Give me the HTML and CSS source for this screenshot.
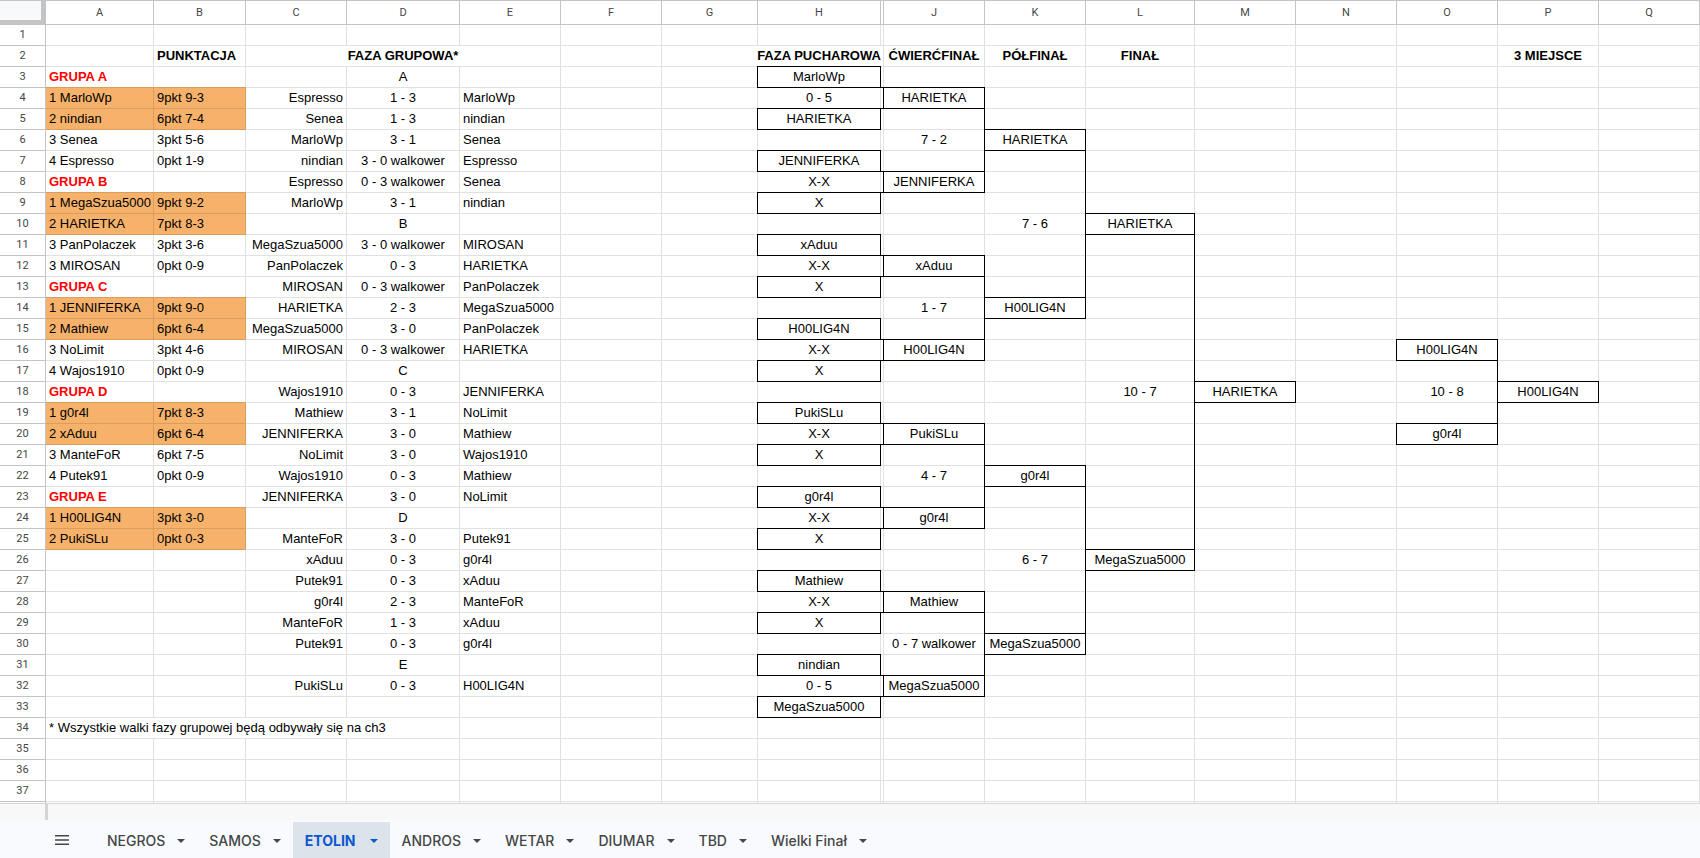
FILE: index.html
```html
<!DOCTYPE html>
<html lang="pl">
<head>
<meta charset="utf-8">
<title>ETOLIN</title>
<link rel="stylesheet" href="styles.css">
</head>
<body>
<main class="sheet">
<table class="grid">
<colgroup>
<col class="w-head"><col class="w-a"><col class="w-b"><col class="w-std"><col class="w-d"><col class="w-std"><col class="w-std"><col class="w-g"><col class="w-h"><col class="w-i"><col class="w-std"><col class="w-std"><col class="w-l"><col class="w-std"><col class="w-std"><col class="w-std"><col class="w-std"><col class="w-std">
</colgroup>
<thead>
<tr><th class="corner"></th><th scope="col">A</th><th scope="col">B</th><th scope="col">C</th><th scope="col">D</th><th scope="col">E</th><th scope="col">F</th><th scope="col">G</th><th scope="col">H</th><th></th><th scope="col">J</th><th scope="col">K</th><th scope="col">L</th><th scope="col">M</th><th scope="col">N</th><th scope="col">O</th><th scope="col">P</th><th scope="col">Q</th></tr>
</thead>
<tbody>
<tr><th scope="row">1</th><td></td><td></td><td></td><td></td><td></td><td></td><td></td><td></td><td></td><td></td><td></td><td></td><td></td><td></td><td></td><td></td><td></td></tr>
<tr class="titles"><th scope="row">2</th><td></td><td>PUNKTACJA</td><td class="open"></td><td class="open"><span class="spill">FAZA GRUPOWA*</span></td><td></td><td></td><td class="open"></td><td class="open"><span class="spill">FAZA PUCHAROWA</span></td><td></td><td><span class="spill">ĆWIERĆFINAŁ</span></td><td>PÓŁFINAŁ</td><td>FINAŁ</td><td></td><td></td><td></td><td>3 MIEJSCE</td><td></td></tr>
<tr><th scope="row">3</th><td class="group">GRUPA A</td><td></td><td></td><td>A</td><td></td><td></td><td></td><td class="box">MarloWp</td><td class="under"></td><td></td><td></td><td></td><td></td><td></td><td></td><td></td><td></td></tr>
<tr><th scope="row">4</th><td class="top">1 MarloWp</td><td class="top">9pkt 9-3</td><td>Espresso</td><td>1 - 3</td><td>MarloWp</td><td></td><td></td><td>0 - 5</td><td class="under"></td><td class="box">HARIETKA</td><td></td><td></td><td></td><td></td><td></td><td></td><td></td></tr>
<tr><th scope="row">5</th><td class="top">2 nindian</td><td class="top">6pkt 7-4</td><td>Senea</td><td>1 - 3</td><td>nindian</td><td></td><td></td><td class="box">HARIETKA</td><td></td><td class="link"></td><td></td><td></td><td></td><td></td><td></td><td></td><td></td></tr>
<tr><th scope="row">6</th><td>3 Senea</td><td>3pkt 5-6</td><td>MarloWp</td><td>3 - 1</td><td>Senea</td><td></td><td></td><td></td><td></td><td class="link">7 - 2</td><td class="box">HARIETKA</td><td></td><td></td><td></td><td></td><td></td><td></td></tr>
<tr><th scope="row">7</th><td>4 Espresso</td><td>0pkt 1-9</td><td>nindian</td><td>3 - 0 walkower</td><td>Espresso</td><td></td><td></td><td class="box">JENNIFERKA</td><td class="under"></td><td class="link"></td><td class="link"></td><td></td><td></td><td></td><td></td><td></td><td></td></tr>
<tr><th scope="row">8</th><td class="group">GRUPA B</td><td></td><td>Espresso</td><td>0 - 3 walkower</td><td>Senea</td><td></td><td></td><td>X-X</td><td class="under"></td><td class="box">JENNIFERKA</td><td class="link"></td><td></td><td></td><td></td><td></td><td></td><td></td></tr>
<tr><th scope="row">9</th><td class="top">1 MegaSzua5000</td><td class="top">9pkt 9-2</td><td>MarloWp</td><td>3 - 1</td><td>nindian</td><td></td><td></td><td class="box">X</td><td></td><td></td><td class="link"></td><td></td><td></td><td></td><td></td><td></td><td></td></tr>
<tr><th scope="row">10</th><td class="top">2 HARIETKA</td><td class="top">7pkt 8-3</td><td></td><td>B</td><td></td><td></td><td></td><td></td><td></td><td></td><td class="link">7 - 6</td><td class="box">HARIETKA</td><td></td><td></td><td></td><td></td><td></td></tr>
<tr><th scope="row">11</th><td>3 PanPolaczek</td><td>3pkt 3-6</td><td>MegaSzua5000</td><td>3 - 0 walkower</td><td>MIROSAN</td><td></td><td></td><td class="box">xAduu</td><td class="under"></td><td></td><td class="link"></td><td class="link"></td><td></td><td></td><td></td><td></td><td></td></tr>
<tr><th scope="row">12</th><td>3 MIROSAN</td><td>0pkt 0-9</td><td>PanPolaczek</td><td>0 - 3</td><td>HARIETKA</td><td></td><td></td><td>X-X</td><td class="under"></td><td class="box">xAduu</td><td class="link"></td><td class="link"></td><td></td><td></td><td></td><td></td><td></td></tr>
<tr><th scope="row">13</th><td class="group">GRUPA C</td><td></td><td>MIROSAN</td><td>0 - 3 walkower</td><td>PanPolaczek</td><td></td><td></td><td class="box">X</td><td></td><td class="link"></td><td class="link"></td><td class="link"></td><td></td><td></td><td></td><td></td><td></td></tr>
<tr><th scope="row">14</th><td class="top">1 JENNIFERKA</td><td class="top">9pkt 9-0</td><td>HARIETKA</td><td>2 - 3</td><td>MegaSzua5000</td><td></td><td></td><td></td><td></td><td class="link">1 - 7</td><td class="box">H00LIG4N</td><td class="link"></td><td></td><td></td><td></td><td></td><td></td></tr>
<tr><th scope="row">15</th><td class="top">2 Mathiew</td><td class="top">6pkt 6-4</td><td>MegaSzua5000</td><td>3 - 0</td><td>PanPolaczek</td><td></td><td></td><td class="box">H00LIG4N</td><td class="under"></td><td class="link"></td><td></td><td class="link"></td><td></td><td></td><td></td><td></td><td></td></tr>
<tr><th scope="row">16</th><td>3 NoLimit</td><td>3pkt 4-6</td><td>MIROSAN</td><td>0 - 3 walkower</td><td>HARIETKA</td><td></td><td></td><td>X-X</td><td class="under"></td><td class="box">H00LIG4N</td><td></td><td class="link"></td><td></td><td></td><td class="box">H00LIG4N</td><td></td><td></td></tr>
<tr><th scope="row">17</th><td>4 Wajos1910</td><td>0pkt 0-9</td><td></td><td>C</td><td></td><td></td><td></td><td class="box">X</td><td></td><td></td><td></td><td class="link"></td><td></td><td></td><td class="link"></td><td></td><td></td></tr>
<tr><th scope="row">18</th><td class="group">GRUPA D</td><td></td><td>Wajos1910</td><td>0 - 3</td><td>JENNIFERKA</td><td></td><td></td><td></td><td></td><td></td><td></td><td class="link">10 - 7</td><td class="box">HARIETKA</td><td></td><td class="link">10 - 8</td><td class="box">H00LIG4N</td><td></td></tr>
<tr><th scope="row">19</th><td class="top">1 g0r4l</td><td class="top">7pkt 8-3</td><td>Mathiew</td><td>3 - 1</td><td>NoLimit</td><td></td><td></td><td class="box">PukiSLu</td><td class="under"></td><td></td><td></td><td class="link"></td><td></td><td></td><td class="link"></td><td></td><td></td></tr>
<tr><th scope="row">20</th><td class="top">2 xAduu</td><td class="top">6pkt 6-4</td><td>JENNIFERKA</td><td>3 - 0</td><td>Mathiew</td><td></td><td></td><td>X-X</td><td class="under"></td><td class="box">PukiSLu</td><td></td><td class="link"></td><td></td><td></td><td class="box">g0r4l</td><td></td><td></td></tr>
<tr><th scope="row">21</th><td>3 ManteFoR</td><td>6pkt 7-5</td><td>NoLimit</td><td>3 - 0</td><td>Wajos1910</td><td></td><td></td><td class="box">X</td><td></td><td class="link"></td><td></td><td class="link"></td><td></td><td></td><td></td><td></td><td></td></tr>
<tr><th scope="row">22</th><td>4 Putek91</td><td>0pkt 0-9</td><td>Wajos1910</td><td>0 - 3</td><td>Mathiew</td><td></td><td></td><td></td><td></td><td class="link">4 - 7</td><td class="box">g0r4l</td><td class="link"></td><td></td><td></td><td></td><td></td><td></td></tr>
<tr><th scope="row">23</th><td class="group">GRUPA E</td><td></td><td>JENNIFERKA</td><td>3 - 0</td><td>NoLimit</td><td></td><td></td><td class="box">g0r4l</td><td class="under"></td><td class="link"></td><td class="link"></td><td class="link"></td><td></td><td></td><td></td><td></td><td></td></tr>
<tr><th scope="row">24</th><td class="top">1 H00LIG4N</td><td class="top">3pkt 3-0</td><td></td><td>D</td><td></td><td></td><td></td><td>X-X</td><td class="under"></td><td class="box">g0r4l</td><td class="link"></td><td class="link"></td><td></td><td></td><td></td><td></td><td></td></tr>
<tr><th scope="row">25</th><td class="top">2 PukiSLu</td><td class="top">0pkt 0-3</td><td>ManteFoR</td><td>3 - 0</td><td>Putek91</td><td></td><td></td><td class="box">X</td><td></td><td></td><td class="link"></td><td class="link"></td><td></td><td></td><td></td><td></td><td></td></tr>
<tr><th scope="row">26</th><td></td><td></td><td>xAduu</td><td>0 - 3</td><td>g0r4l</td><td></td><td></td><td></td><td></td><td></td><td class="link">6 - 7</td><td class="box">MegaSzua5000</td><td></td><td></td><td></td><td></td><td></td></tr>
<tr><th scope="row">27</th><td></td><td></td><td>Putek91</td><td>0 - 3</td><td>xAduu</td><td></td><td></td><td class="box">Mathiew</td><td class="under"></td><td></td><td class="link"></td><td></td><td></td><td></td><td></td><td></td><td></td></tr>
<tr><th scope="row">28</th><td></td><td></td><td>g0r4l</td><td>2 - 3</td><td>ManteFoR</td><td></td><td></td><td>X-X</td><td class="under"></td><td class="box">Mathiew</td><td class="link"></td><td></td><td></td><td></td><td></td><td></td><td></td></tr>
<tr><th scope="row">29</th><td></td><td></td><td>ManteFoR</td><td>1 - 3</td><td>xAduu</td><td></td><td></td><td class="box">X</td><td></td><td class="link"></td><td class="link"></td><td></td><td></td><td></td><td></td><td></td><td></td></tr>
<tr><th scope="row">30</th><td></td><td></td><td>Putek91</td><td>0 - 3</td><td>g0r4l</td><td></td><td></td><td></td><td></td><td class="link">0 - 7 walkower</td><td class="box">MegaSzua5000</td><td></td><td></td><td></td><td></td><td></td><td></td></tr>
<tr><th scope="row">31</th><td></td><td></td><td></td><td>E</td><td></td><td></td><td></td><td class="box">nindian</td><td class="under"></td><td class="link"></td><td></td><td></td><td></td><td></td><td></td><td></td><td></td></tr>
<tr><th scope="row">32</th><td></td><td></td><td>PukiSLu</td><td>0 - 3</td><td>H00LIG4N</td><td></td><td></td><td>0 - 5</td><td class="under"></td><td class="box">MegaSzua5000</td><td></td><td></td><td></td><td></td><td></td><td></td><td></td></tr>
<tr><th scope="row">33</th><td></td><td></td><td></td><td></td><td></td><td></td><td></td><td class="box">MegaSzua5000</td><td></td><td></td><td></td><td></td><td></td><td></td><td></td><td></td><td></td></tr>
<tr><th scope="row">34</th><td colspan="4">* Wszystkie walki fazy grupowej będą odbywały się na ch3</td><td></td><td></td><td></td><td></td><td></td><td></td><td></td><td></td><td></td><td></td><td></td><td></td><td></td></tr>
<tr><th scope="row">35</th><td></td><td></td><td></td><td></td><td></td><td></td><td></td><td></td><td></td><td></td><td></td><td></td><td></td><td></td><td></td><td></td><td></td></tr>
<tr><th scope="row">36</th><td></td><td></td><td></td><td></td><td></td><td></td><td></td><td></td><td></td><td></td><td></td><td></td><td></td><td></td><td></td><td></td><td></td></tr>
<tr><th scope="row">37</th><td></td><td></td><td></td><td></td><td></td><td></td><td></td><td></td><td></td><td></td><td></td><td></td><td></td><td></td><td></td><td></td><td></td></tr>
<tr class="cut"><th></th><td></td><td></td><td></td><td></td><td></td><td></td><td></td><td></td><td></td><td></td><td></td><td></td><td></td><td></td><td></td><td></td><td></td></tr>
</tbody>
</table>
<div class="scrollbar"><div class="freeze-handle"></div></div>
</main>
<nav class="tabs" aria-label="Arkusze">
<button class="all-sheets" type="button" aria-label="Wszystkie arkusze"><svg width="14" height="10" viewBox="0 0 14 10"><path fill="currentColor" d="M0 0h14v1.500H0zM0 4.200h14v1.500H0zM0 8.400h14v1.500H0z"/></svg></button>
<button class="tab" type="button">NEGROS<svg width="8" height="4" viewBox="0 0 8 4"><path d="M0 0h8L4 4z"/></svg></button>
<button class="tab" type="button">SAMOS<svg width="8" height="4" viewBox="0 0 8 4"><path d="M0 0h8L4 4z"/></svg></button>
<button class="tab active" type="button" aria-current="page">ETOLIN<svg width="8" height="4" viewBox="0 0 8 4"><path d="M0 0h8L4 4z"/></svg></button>
<button class="tab" type="button">ANDROS<svg width="8" height="4" viewBox="0 0 8 4"><path d="M0 0h8L4 4z"/></svg></button>
<button class="tab" type="button">WETAR<svg width="8" height="4" viewBox="0 0 8 4"><path d="M0 0h8L4 4z"/></svg></button>
<button class="tab" type="button">DIUMAR<svg width="8" height="4" viewBox="0 0 8 4"><path d="M0 0h8L4 4z"/></svg></button>
<button class="tab" type="button">TBD<svg width="8" height="4" viewBox="0 0 8 4"><path d="M0 0h8L4 4z"/></svg></button>
<button class="tab" type="button">Wielki Finał<svg width="8" height="4" viewBox="0 0 8 4"><path d="M0 0h8L4 4z"/></svg></button>
</nav>
</body>
</html>
```
FILE: styles.css
```css
* { box-sizing: border-box; }

body {
  margin: 0;
  background: #f9fafe;
  font-family: "Liberation Sans", Arial, sans-serif;
  font-size: 13px;
  color: #000;
}

/* Grid */
.grid {
  width: 100%;
  table-layout: fixed;
  border-collapse: separate;
  border-spacing: 0;
  background: #fff;
}

.w-head { width: 46px; }
.w-a { width: 108px; }
.w-b { width: 92px; }
.w-std { width: 101px; }
.w-d { width: 113px; }
.w-g { width: 96px; }
.w-h { width: 123px; }
.w-i { width: 3px; }
.w-l { width: 109px; }

.grid th {
  height: 21px;
  padding: 0;
  border: 0 solid #c4c4c4;
  border-width: 0 1px 1px 0;
  font: 400 11px/16px Roboto, sans-serif;
  color: #444746;
}

.grid thead th {
  height: 25px;
  border-top-width: 1px;
}

.grid thead .corner {
  border-right-width: 5px;
  border-bottom-width: 5px;
  background: #f8f9fa;
}

/* Gridlines are inset shadows so that crossing lines meet squarely */
.grid td {
  --right: #e1e1e1;
  --bottom: #e1e1e1;
  height: 21px;
  padding: 1px 4px 2px 3px;
  box-shadow: inset -1px 0 var(--right), inset 0 -1px var(--bottom);
  line-height: 18px;
  white-space: nowrap;
}

.grid td:nth-child(4) { text-align: right; }
.grid td:nth-child(5),
.grid td:nth-child(n+9) { text-align: center; }
.grid td:nth-child(10) { padding: 0; }

.grid .titles td { font-weight: 700; }
.grid .group { font-weight: 700; color: #f00; }

.grid .top {
  background: #f6b26b;
  box-shadow: inset -1px -1px #d99d5e, 0 -1px #d99d5e;
}

.grid .open { --right: transparent; }
.spill { display: flex; justify-content: center; }

/* Bracket lines */
.grid .box {
  padding-right: 1px;
  padding-left: 0;
  box-shadow: inset -1px -1px #000, -1px -1px #000, 0 -1px #000, -1px 0 #000;
}
.grid .link {
  --right: #000;
  padding-right: 1px;
  padding-left: 0;
}
.grid .under {
  box-shadow: inset 0 -1px #000, inset -1px 0 #e1e1e1;
}

.grid .cut th,
.grid .cut td {
  --bottom: transparent;
  height: 1px;
  padding: 0;
  border-bottom-width: 0;
  line-height: 0;
}

.scrollbar {
  height: 17px;
  padding-left: 45px;
  border-top: 1px solid #d5d5d5;
  background: #f8f8f8;
}
.freeze-handle {
  width: 3px;
  height: 100%;
  background: #d5d5d5;
}

/* Sheet tabs */
.tabs {
  display: flex;
  padding-top: 2px;
}
.tabs button {
  display: flex;
  align-items: center;
  height: 36px;
  border: 0;
  background: none;
  color: #444746;
  font: 500 14px/20px Inter, sans-serif;
}
.tabs .all-sheets {
  width: 54px;
  margin-left: 41px;
  padding: 0 14px;
}
.tabs .tab {
  gap: 12px;
  padding: 2px 12px 0;
  white-space: nowrap;
}
.tab svg { fill: currentColor; }
.tabs .active {
  gap: 14px;
  background: #dde3ea;
  color: #0b57d0;
  font-weight: 700;
}
```
